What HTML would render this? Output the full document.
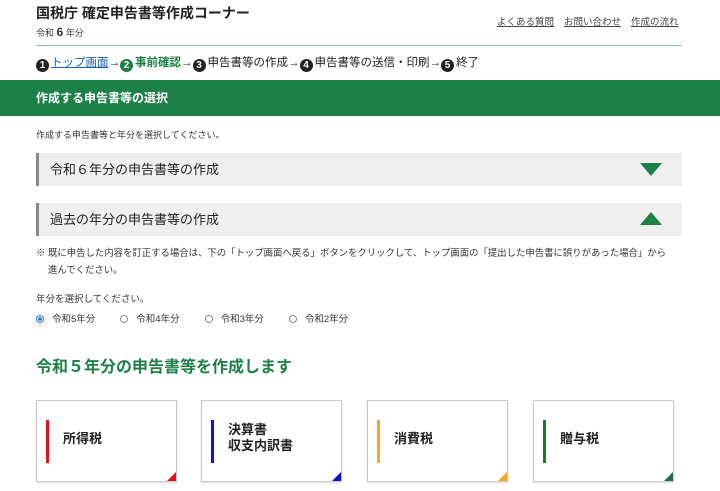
<!DOCTYPE html>
<html><head><meta charset="utf-8"><style>
*{margin:0;padding:0;box-sizing:border-box}
body{width:720px;height:491px;overflow:hidden;background:#fff;font-family:"Liberation Sans","Noto Sans CJK JP",sans-serif;color:#333;position:relative}
.a{position:absolute}
.u{text-decoration:underline}
.n{display:inline-block;width:13px;height:13px;border-radius:50%;background:#222;color:#fff;font-size:10px;line-height:13px;text-align:center;font-weight:bold;vertical-align:-2px;margin-right:2px}
.acc{position:absolute;left:36px;width:646px;height:33px;background:#efefef;border-left:3px solid #888;font-size:13px;line-height:33px;padding-left:11px;color:#222}
.card{position:absolute;top:400px;width:141px;height:82px;border:1px solid #ccc;background:#fff;box-shadow:0 1px 2px rgba(0,0,0,.15)}
.card .bar{position:absolute;left:9px;top:19px;width:3px;height:43px}
.card .t{position:absolute;left:26px;font-size:13px;font-weight:bold;color:#222;line-height:16px}
.card .c{position:absolute;right:0;bottom:0;width:0;height:0;border-left:9px solid transparent;border-bottom:9px solid}
.rd{display:inline-block;width:8px;height:8px;border:1px solid #888;border-radius:50%;margin-right:8px;vertical-align:-1px}
.sp{display:inline-block;width:25px}
</style></head><body>
<div class="a" style="left:36px;top:3px;font-size:14px;font-weight:bold;color:#222">国税庁 確定申告書等作成コーナー</div>
<div class="a" style="left:36px;top:25px;font-size:9px;color:#333">令和 <b style="font-size:12px">6</b> 年分</div>
<div class="a u" style="left:497px;top:14px;font-size:9.5px;color:#444">よくある質問</div>
<div class="a u" style="left:564px;top:14px;font-size:9.5px;color:#444">お問い合わせ</div>
<div class="a u" style="left:631px;top:14px;font-size:9.5px;color:#444">作成の流れ</div>
<div class="a" style="left:36px;top:45px;width:646px;height:1px;background:#8cbfa5"></div>
<div class="a" style="left:36px;top:54px;font-size:11.5px;color:#222;white-space:nowrap"><span class="n">1</span><span class="u" style="color:#1a5fa8">トップ画面</span>→<span class="n" style="background:#1e7e46">2</span><b style="color:#1e7e46">事前確認</b>→<span class="n">3</span>申告書等の作成→<span class="n">4</span>申告書等の送信・印刷→<span class="n">5</span>終了</div>
<div class="a" style="left:0;top:80px;width:720px;height:36px;background:#1e8049;color:#fff;font-size:12px;font-weight:bold;line-height:36px;padding-left:36px">作成する申告書等の選択</div>
<div class="a" style="left:36px;top:128px;font-size:9px">作成する申告書等と年分を選択してください。</div>
<div class="acc" style="top:153px">令和６年分の申告書等の作成<div class="a" style="right:20px;top:10px;border-left:11px solid transparent;border-right:11px solid transparent;border-top:13px solid #1e8049"></div></div>
<div class="acc" style="top:203px">過去の年分の申告書等の作成<div class="a" style="right:20px;top:9px;border-left:11px solid transparent;border-right:11px solid transparent;border-bottom:13px solid #1e8049"></div></div>
<div class="a" style="left:36px;top:244px;font-size:9.4px;line-height:17px;width:660px;white-space:nowrap">※ 既に申告した内容を訂正する場合は、下の「トップ画面へ戻る」ボタンをクリックして、トップ画面の「提出した申告書に誤りがあった場合」から<br>　 進んでください。</div>
<div class="a" style="left:36px;top:291px;font-size:9.5px">年分を選択してください。</div>
<div class="a" style="left:36px;top:311px;font-size:9.5px;white-space:nowrap"><span class="rd" style="border-color:#2a6fd6;background:radial-gradient(#2a6fd6 40%,#fff 50%)"></span>令和5年分<span class="sp"></span><span class="rd"></span>令和4年分<span class="sp"></span><span class="rd"></span>令和3年分<span class="sp"></span><span class="rd"></span>令和2年分</div>
<div class="a" style="left:36px;top:353px;font-size:16px;font-weight:bold;color:#1e8049">令和５年分の申告書等を作成します</div>
<div class="card" style="left:36px"><div class="bar" style="background:#e0121b"></div><div class="t" style="top:30px">所得税</div><div class="c" style="border-bottom-color:#e0121b"></div></div>
<div class="card" style="left:201px"><div class="bar" style="background:#1010d8"></div><div class="t" style="top:21px">決算書<br>収支内訳書</div><div class="c" style="border-bottom-color:#1010d8"></div></div>
<div class="card" style="left:367px"><div class="bar" style="background:#f0a820"></div><div class="t" style="top:30px">消費税</div><div class="c" style="border-bottom-color:#f0a820"></div></div>
<div class="card" style="left:533px"><div class="bar" style="background:#1a7a2a"></div><div class="t" style="top:30px">贈与税</div><div class="c" style="border-bottom-color:#1e6e48"></div></div>
</body></html>
